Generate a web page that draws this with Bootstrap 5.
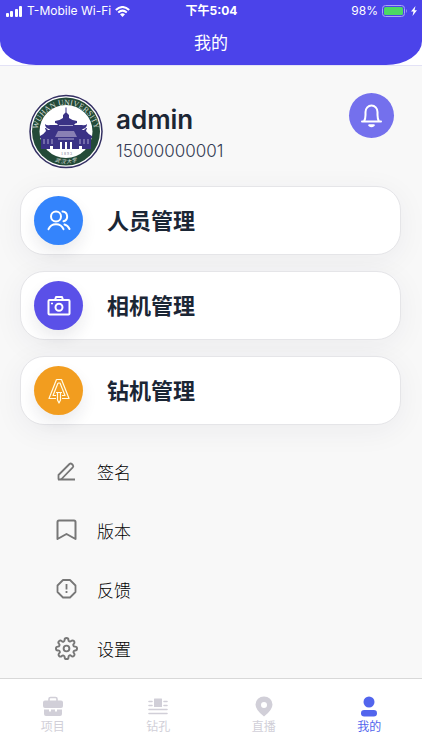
<!DOCTYPE html>
<html lang="zh-CN">
<head>
<meta charset="utf-8">
<meta name="viewport" content="width=device-width, initial-scale=1">
<title>我的</title>
<link rel="stylesheet" href="https://cdn.jsdelivr.net/npm/bootstrap@5.3.0/dist/css/bootstrap.min.css">
<style>
body { font-family: Inter, "Noto Sans CJK SC", sans-serif; background: #f8f8f8; color: #1b2635; }
svg { display: block; flex: none; }
.top-wrap { background: #fff; border-bottom: 1px solid #e3e2f6; }
.top-panel { background: #4b43ea; border-radius: 0 0 36px 36px / 0 0 24px 24px; height: 65px; }
.status-line { height: 22px; font-size: 12px; line-height: 22px; padding: 0 5px 0 6px; }
.status-line > div { flex: 1 1 0; }
.page-name { font-size: 17px; line-height: 42px; }
.profile { padding: 27px 28px 14px 29px; }
.profile-text { padding: 11px 0 0 13px; }
.user-name { font-size: 26px; line-height: 32px; font-weight: 600; }
.user-phone { font-size: 17px; line-height: 30px; color: #343b54; font-weight: 300; }
.bell-btn { width: 45px; height: 45px; background: #7470ed; }
.menu-cards { padding: 0 21px 0 20px; gap: 16px; }
.menu-card { height: 69px; border: 1px solid #e5e5e8; border-radius: 24px; padding: 0 13px; gap: 24px; color: #1b2635; font-size: 22px; font-weight: 700; box-shadow: 0 6px 30px rgba(40,40,80,.055); }
.menu-card > span:last-child { padding-top: 2px; }
.disc { width: 49px; height: 49px; box-shadow: 0 8px 16px rgba(30,30,60,.09); }
.disc-blue { background: #3484fc; }
.disc-violet { background: #5a50e8; }
.disc-orange { background: #f29d1f; }
.option-list { padding: 17px 55px 0; }
.option-row { height: 59px; gap: 19px; color: #000; font-size: 17px; font-weight: 300; }
.option-row span { padding-top: 5px; }
.tab-bar { height: 72px; border-top: 1px solid #d8d8d8; }
.tab-item { padding-top: 17px; gap: 1px; font-size: 12px; line-height: 17px; color: #d1cfd8; }
.tab-item.current { color: #5265ed; }
</style>
<script src="https://cdn.jsdelivr.net/npm/bootstrap@5.3.0/dist/js/bootstrap.bundle.min.js"></script>
</head>
<body>
<div class="d-flex flex-column min-vh-100">
  <header class="top-wrap">
    <div class="top-panel text-white">
      <div class="status-line d-flex">
        <div class="d-flex align-items-center gap-1">
          <svg width="17" height="11" fill="#fff"><rect y="7" width="3" height="4" rx="1"/><rect x="4" y="5" width="3" height="6" rx="1"/><rect x="9" y="3" width="3" height="8" rx="1"/><rect x="13" width="3" height="11" rx="1"/></svg>
          <span class="text-nowrap">T-Mobile Wi-Fi</span>
          <svg width="15" height="11" viewBox="0 0 15 11" fill="none" stroke="#fff" stroke-width="2"><path d="M.8 4Q7.500-2 14.200 4M3.200 6.500Q7.500 2.800 11.800 6.500"/><path d="M5 8.200Q7.500 6.200 10 8.200L7.500 11z" fill="#fff" stroke="none"/></svg>
        </div>
        <div class="text-center fw-bold">下午5:04</div>
        <div class="d-flex align-items-center justify-content-end gap-1">
          <span>98%</span>
          <svg width="25" height="12" viewBox="0 0 25 12"><rect x=".5" y=".5" width="22" height="11" rx="3" fill="none" stroke="#a9a5f5"/><rect x="2" y="2" width="19" height="8" rx="1.500" fill="#4cd964"/><path d="M24 4q1.500 2 0 4z" fill="#a9a5f5"/></svg>
          <svg width="6" height="10" viewBox="0 0 6 10" fill="#fff"><path d="M4.500 0 0 5.500h2.500L1.500 10 6 4.300H3.500z"/></svg>
        </div>
      </div>
      <h1 class="page-name fw-normal text-center m-0">我的</h1>
    </div>
  </header>

  <main class="flex-grow-1">
    <section class="profile d-flex align-items-start">
      <svg width="74" height="79" viewBox="0 0 74 79" role="img" aria-label="Wuhan University">
        <defs>
          <path id="ringTop" d="M10.500 51A28.500 28.500 0 1 1 63.500 51"/>
          <path id="ringBottom" d="M12 58Q37 83 62 58"/>
        </defs>
        <circle cx="37" cy="38.500" r="36" fill="#fff" stroke="#343063" stroke-width="1.500"/>
        <circle cx="37" cy="38.500" r="34" fill="#234a38"/>
        <circle cx="37" cy="38.500" r="26.500" fill="#fff"/>
        <text font-family="Liberation Serif, serif" font-size="8" fill="#d5ddd6"><textPath href="#ringTop" startOffset="50%" text-anchor="middle">WUHAN UNIVERSITY</textPath></text>
        <text font-family="Noto Sans CJK SC, sans-serif" font-size="5" font-style="italic" fill="#e4e9e5"><textPath href="#ringBottom" startOffset="50%" text-anchor="middle">武 汉 大 学</textPath></text>
        <g fill="#3a3285">
          <path d="M36.500 14.500h1v5l2.500 2.500v3q4 3 8 3v2q-2 0-3 2H29q-1-2-3-2v-2q4 0 8-3v-3l2.500-2.500z"/>
          <path d="M16 31q2 2 5 1h32q3 1 5-1 0 4-4 5l-4 3H24l-4-3q-4-1-4-5z"/>
          <path d="M11 43q4-2 6-5l-1-3h1l2 2h7l2-2h1l-1 3q2 3 6 5v2H11zM40 43q4-2 6-5l-1-3h1l2 2h7l2-2h1l-1 3q2 3 6 5v2H40z"/>
          <path d="M12 44h50v12h-9v-3h-3v3h-7v-7h-2v7h-3v-7h-2v7h-3v-7h-2v7h-7v-3h-3v3h-9z"/>
        </g>
        <path d="M29 38h16l3 6H26z" fill="#8980b4"/>
        <path d="M15 46v5M19 46v5M23 46v5M51 46v5M55 46v5M59 46v5M29 46h16M30 32.500h14" stroke="#aaa4ce" stroke-width="1"/>
        <text x="37.500" y="61.500" text-anchor="middle" font-family="Liberation Serif, serif" font-size="4" fill="#70708a">1 8 9 3</text>
      </svg>
      <div class="profile-text flex-grow-1">
        <div class="user-name">admin</div>
        <div class="user-phone">15000000001</div>
      </div>
      <button type="button" class="bell-btn btn border-0 rounded-circle p-0 d-flex align-items-center justify-content-center" aria-label="通知">
        <svg width="23" height="25" viewBox="0 0 23 25" fill="none" stroke="#fff" stroke-width="2" stroke-linecap="round" stroke-linejoin="round"><path d="M2 18.500H21M4 18.500Q5.500 16 5.500 12V9a6 6.500 0 0 1 12 0v3q0 4 1.500 6.500"/><path d="M9.200 22.200q2.300 2 4.600 0z" fill="#fff"/></svg>
      </button>
    </section>

    <nav class="menu-cards d-flex flex-column">
      <a href="#people" class="menu-card d-flex align-items-center bg-white text-decoration-none">
        <span class="disc disc-blue rounded-circle d-flex align-items-center justify-content-center">
          <svg width="24" height="21" viewBox="0 0 24 21" fill="none" stroke="#fff" stroke-width="2" stroke-linecap="round"><circle cx="9" cy="6.500" r="5"/><path d="M15.500 1.500a5 5 0 0 1 1 9.800M1.500 19.200q2-5 7.500-5t7.500 5M17.500 14.500q3.300.8 5 4.500"/></svg>
        </span><span>人员管理</span>
      </a>
      <a href="#camera" class="menu-card d-flex align-items-center bg-white text-decoration-none">
        <span class="disc disc-violet rounded-circle d-flex align-items-center justify-content-center">
          <svg width="24" height="20" viewBox="0 0 24 20" fill="none" stroke="#fff" stroke-width="2" stroke-linejoin="round"><rect x="1.500" y="4" width="21" height="14.500" rx="1"/><path d="M8 4l1-3h6l1 3"/><circle cx="12" cy="11.200" r="3.500"/><path d="M4 7.500h2" stroke-width="1.500"/></svg>
        </span><span>相机管理</span>
      </a>
      <a href="#drill" class="menu-card d-flex align-items-center bg-white text-decoration-none">
        <span class="disc disc-orange rounded-circle d-flex align-items-center justify-content-center">
          <svg width="22" height="26" viewBox="0 0 22 26" fill="none" stroke="#fffbe6" stroke-width="1.200" stroke-linejoin="round"><path d="M8.500 1.500h5L21 20.500h-7M8 20.500H1L8.500 1.500M10 5h2l5 12.500h-3M10 5 5 17.500h3M8 14.500h6M9.500 14.500v7.500L11 25l1.500-3v-7.500"/></svg>
        </span><span>钻机管理</span>
      </a>
    </nav>

    <nav class="option-list d-flex flex-column">
      <a href="#signature" class="option-row d-flex align-items-center text-decoration-none">
        <svg width="23" height="23" viewBox="0 0 23 23" fill="none" stroke="#777" stroke-width="1.800" stroke-linejoin="round"><path d="M3 19.500H20M3.500 19.500V15L14.500 4q1.200-1 2.300 0l1 1q1 1.200 0 2.300L7 18.500Q6 19.500 3.500 19.500"/></svg><span>签名</span>
      </a>
      <a href="#version" class="option-row d-flex align-items-center text-decoration-none">
        <svg width="23" height="23" viewBox="0 0 23 23" fill="none" stroke="#777" stroke-width="2" stroke-linejoin="round"><path d="M2.500 20V3q0-1.500 1.500-1.500h15Q20.500 1.500 20.500 3v17l-9-5z"/></svg><span>版本</span>
      </a>
      <a href="#feedback" class="option-row d-flex align-items-center text-decoration-none">
        <svg width="23" height="23" viewBox="0 0 23 23" fill="none" stroke="#777" stroke-width="1.800" stroke-linejoin="round"><path d="M8 2h7l5.500 5.500V14L15 19.500H8L2.500 14V7.500z"/><path d="M11.500 6v5.500M11.500 13v2" stroke-width="1.800"/></svg><span>反馈</span>
      </a>
      <a href="#settings" class="option-row d-flex align-items-center text-decoration-none">
        <svg width="23" height="23" viewBox="0 0 24 24" fill="none" stroke="#777" stroke-width="2" stroke-linejoin="round"><circle cx="12" cy="12" r="3"/><path d="M19.400 15a1.650 1.650 0 0 0 .33 1.820l.06.06a2 2 0 1 1-2.830 2.830l-.06-.06a1.650 1.650 0 0 0-2.820 1.170V21a2 2 0 0 1-4 0v-.09a1.650 1.650 0 0 0-2.900-1.090l-.06.06a2 2 0 1 1-2.830-2.830l.06-.06A1.650 1.650 0 0 0 3.090 14H3a2 2 0 0 1 0-4h.09a1.650 1.650 0 0 0 1.180-2.820l-.06-.06a2 2 0 1 1 2.830-2.830l.06.06A1.650 1.650 0 0 0 10 3.090V3a2 2 0 0 1 4 0v.09a1.650 1.650 0 0 0 2.820 1.170l.06-.06a2 2 0 1 1 2.830 2.830l-.06.06A1.650 1.650 0 0 0 20.910 10H21a2 2 0 0 1 0 4h-.09A1.650 1.650 0 0 0 19.400 15z"/></svg><span>设置</span>
      </a>
    </nav>
  </main>

  <nav class="tab-bar bg-white row g-0 flex-shrink-0 sticky-bottom" aria-label="主导航">
    <a href="#projects" class="tab-item col d-flex flex-column align-items-center text-decoration-none">
      <svg width="20" height="21" viewBox="0 0 20 21" fill="currentColor"><path d="M6 5V3q0-1.500 1.500-1.500h5Q14 1.500 14 3v2" fill="none" stroke="currentColor" stroke-width="1.600"/><path d="M2 4.500h16q2 0 2 2V10q0 2-2 2H2q-2 0-2-2V6.500q0-2 2-2zM1 13.500h5v2h2v-2h4v2h2v-2h5V18q0 2-2 2H3q-2 0-2-2z"/></svg>项目
    </a>
    <a href="#holes" class="tab-item col d-flex flex-column align-items-center text-decoration-none">
      <svg width="20" height="21" viewBox="0 0 20 21" fill="currentColor"><rect x="6" y="2.500" width="8" height="8.500" rx=".5"/><path d="M1 5.500h3M1 9.500h3M16 5.500h3M16 9.500h3M1 13.500h18M1 17.500h18" stroke="currentColor" stroke-width="1.600" stroke-linecap="round"/></svg>钻孔
    </a>
    <a href="#live" class="tab-item col d-flex flex-column align-items-center text-decoration-none">
      <svg width="20" height="21" viewBox="0 0 20 21" fill="currentColor"><path fill-rule="evenodd" d="M10 20.500Q1.500 14 1.500 8.500a8.500 8 0 0 1 17 0Q18.500 14 10 20.500zM10 6a3 3 0 1 0 0 6 3 3 0 1 0 0-6z"/></svg>直播
    </a>
    <a href="#me" class="tab-item current col d-flex flex-column align-items-center text-decoration-none" aria-current="page">
      <svg width="20" height="21" viewBox="0 0 20 21" fill="currentColor"><circle cx="10" cy="6" r="5.500"/><rect x="2" y="14" width="16" height="6.500" rx="3.200"/></svg>我的
    </a>
  </nav>
</div>
</body>
</html>
